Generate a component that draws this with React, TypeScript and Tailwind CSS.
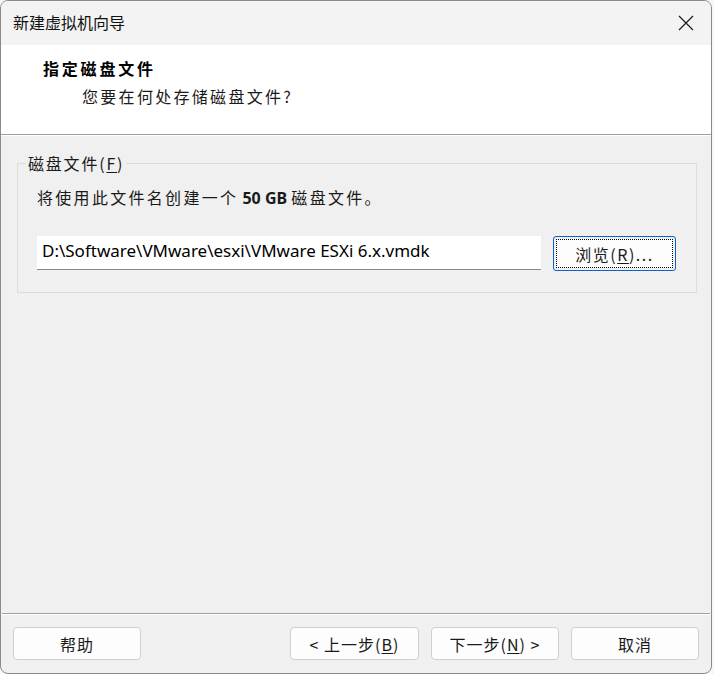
import React from "react";

const cjk = { fontFamily: '"Noto Sans CJK SC", "Noto Sans", sans-serif' };
const latin = { fontFamily: '"Noto Sans", "Noto Sans CJK SC", sans-serif' };

function Btn({ children, className = "" }: { children: React.ReactNode; className?: string }) {
  return (
    <div
      className={
        "h-[33px] w-[128px] flex items-center justify-center rounded-[4px] border border-[#d0d0d0] bg-[#fdfdfd] text-[16px] tracking-[1px] text-[#1a1a1a] " +
        className
      }
      style={cjk}
    >
      {children}
    </div>
  );
}

export default function App() {
  return (
    <div className="w-[714px] h-[674px] bg-[#f7f7f7]">
      <div className="w-[712px] h-[674px] rounded-[8px] border border-[#8a8a8a] overflow-hidden flex flex-col bg-[#f0f0f0]">
        {/* title bar */}
        <div className="h-[44px] bg-[#f3f3f3] flex items-center justify-between pl-[12px] pr-[17px] shrink-0">
          <span className="text-[16px] text-[#111] -mt-[2px]" style={cjk}>
            新建虚拟机向导
          </span>
          <svg width="16" height="16" viewBox="0 0 16 16">
            <path d="M1 1 L15 15 M15 1 L1 15" stroke="#1a1a1a" strokeWidth="1.2" fill="none" />
          </svg>
        </div>
        {/* header */}
        <div className="h-[89px] bg-white shrink-0 pt-[13px]">
          <div className="pl-[42px] text-[16px] leading-[20px] font-bold tracking-[2.8px] text-black" style={cjk}>
            指定磁盘文件
          </div>
          <div className="pl-[81px] mt-[8px] text-[16px] leading-[20px] tracking-[2.3px] text-[#1a1a1a]" style={cjk}>
            您要在何处存储磁盘文件?
          </div>
        </div>
        <div className="h-[1px] bg-[#a0a0a0] shrink-0" />
        <div className="h-[1px] bg-white shrink-0" />
        {/* body */}
        <div className="flex-1 flex flex-col">
          <div className="relative mt-[27px] ml-[16px] w-[680px] h-[130px] border border-[#dcdcdc] pt-[23px] px-[19px]">
            <span
              className="absolute -top-[11px] left-[8px] bg-[#f0f0f0] px-[2px] text-[16px] leading-[20px] tracking-[1.8px] text-[#1a1a1a]"
              style={cjk}
            >
              磁盘文件(<span className="underline underline-offset-2">F</span>)
            </span>
            <div className="text-[16px] leading-[20px] text-[#1a1a1a] tracking-[2.3px]" style={cjk}>
              将使用此文件名创建一个
              <span className="font-bold tracking-normal" style={latin}> 50 GB </span>
              磁盘文件。
            </div>
            <div className="mt-[28px] flex items-start gap-[12px]">
              <div
                className="h-[34px] w-[504px] bg-white border-b border-[#8a8a8a] flex items-center pl-[5px] pb-[3px] text-[17px] text-black"
                style={latin}
              >
                D:\Software\VMware\esxi\VMware ESXi 6.x.vmdk
              </div>
              <div className="h-[35px] w-[123px] rounded-[3px] border border-[#0a64c8] p-[2px]">
                <div
                  className="w-full h-full border border-dotted border-black flex items-center justify-center bg-[#fdfdfd] text-[16px] tracking-[1.5px] text-[#1a1a1a]"
                  style={cjk}
                >
                  浏览(<span className="underline underline-offset-2">R</span>)...
                </div>
              </div>
            </div>
          </div>
        </div>
        {/* footer */}
        <div className="h-[1px] bg-[#a0a0a0] shrink-0 mx-[1px]" />
        <div className="h-[1px] bg-white shrink-0" />
        <div className="h-[58px] shrink-0 flex items-start pt-[12px] pl-[12px] pr-[12px]">
          <Btn>帮助</Btn>
          <div className="flex-1" />
          <Btn className="w-[129px]">
            &lt; 上一步(<span className="underline underline-offset-2">B</span>)
          </Btn>
          <Btn className="ml-[12px]">
            下一步(<span className="underline underline-offset-2">N</span>) &gt;
          </Btn>
          <Btn className="ml-[12px]">取消</Btn>
        </div>
      </div>
    </div>
  );
}
